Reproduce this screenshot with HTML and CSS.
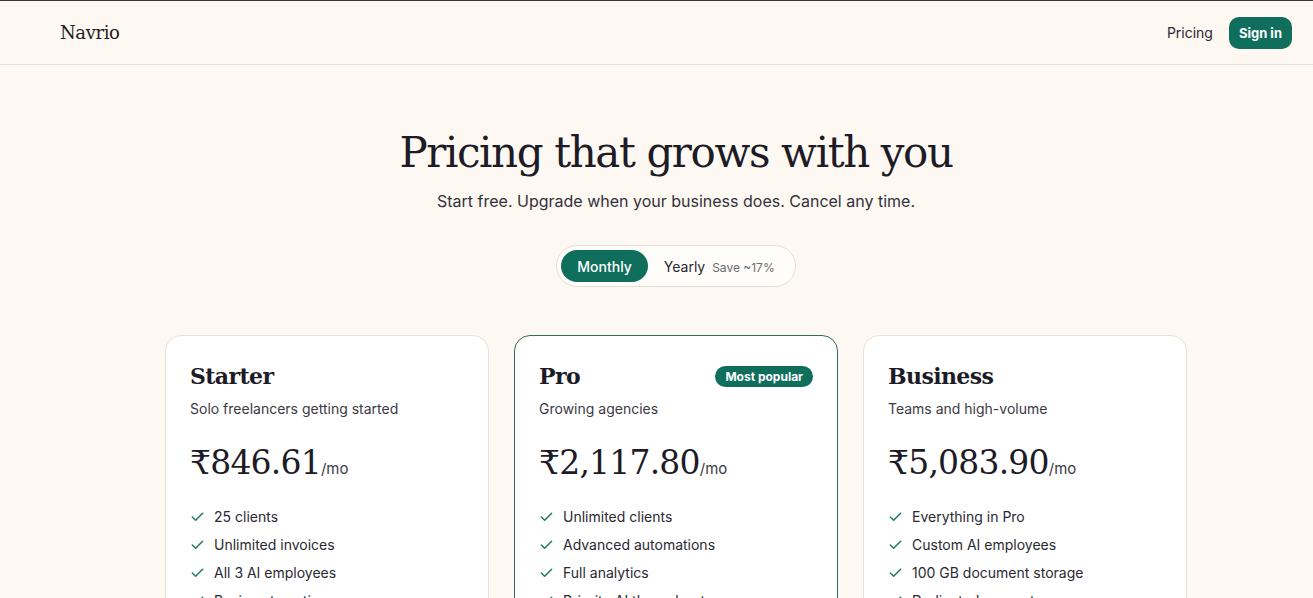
FILE: index.html
```html
<!DOCTYPE html>
<html lang="en">
<head>
  <meta charset="UTF-8">
  <meta name="viewport" content="width=device-width, initial-scale=1.0">
  <title>Navrio Pricing</title>
  <link rel="stylesheet" href="styles.css">
</head>
<body>
  <header class="topbar">
    <a class="brand" href="#">Navrio</a>
    <nav class="nav">
      <a class="nav-link" href="#">Pricing</a>
      <a class="btn-signin" href="#">Sign in</a>
    </nav>
  </header>

  <main class="pricing">
    <h1 class="title">Pricing that grows with you</h1>
    <p class="lead">Start free. Upgrade when your business does. Cancel any time.</p>

    <div class="toggle">
      <button class="toggle-btn active">Monthly</button>
      <button class="toggle-btn">Yearly <span class="save">Save ~17%</span></button>
    </div>

    <div class="plans">
      <div class="plan">
        <div class="plan-head">
          <h2 class="plan-name">Starter</h2>
        </div>
        <p class="plan-desc">Solo freelancers getting started</p>
        <div class="price"><span class="amount">₹846.61</span><span class="per">/mo</span></div>
        <ul class="features">
          <li><svg viewBox="0 0 16 16"><path d="M2.5 8.5l3.5 3.5 7.5-7.5"/></svg>25 clients</li>
          <li><svg viewBox="0 0 16 16"><path d="M2.5 8.5l3.5 3.5 7.5-7.5"/></svg>Unlimited invoices</li>
          <li><svg viewBox="0 0 16 16"><path d="M2.5 8.5l3.5 3.5 7.5-7.5"/></svg>All 3 AI employees</li>
          <li><svg viewBox="0 0 16 16"><path d="M2.5 8.5l3.5 3.5 7.5-7.5"/></svg>Basic automations</li>
        </ul>
      </div>

      <div class="plan featured">
        <div class="plan-head">
          <h2 class="plan-name">Pro</h2>
          <span class="badge">Most popular</span>
        </div>
        <p class="plan-desc">Growing agencies</p>
        <div class="price"><span class="amount">₹2,117.80</span><span class="per">/mo</span></div>
        <ul class="features">
          <li><svg viewBox="0 0 16 16"><path d="M2.5 8.5l3.5 3.5 7.5-7.5"/></svg>Unlimited clients</li>
          <li><svg viewBox="0 0 16 16"><path d="M2.5 8.5l3.5 3.5 7.5-7.5"/></svg>Advanced automations</li>
          <li><svg viewBox="0 0 16 16"><path d="M2.5 8.5l3.5 3.5 7.5-7.5"/></svg>Full analytics</li>
          <li><svg viewBox="0 0 16 16"><path d="M2.5 8.5l3.5 3.5 7.5-7.5"/></svg>Priority AI throughput</li>
        </ul>
      </div>

      <div class="plan">
        <div class="plan-head">
          <h2 class="plan-name">Business</h2>
        </div>
        <p class="plan-desc">Teams and high-volume</p>
        <div class="price"><span class="amount">₹5,083.90</span><span class="per">/mo</span></div>
        <ul class="features">
          <li><svg viewBox="0 0 16 16"><path d="M2.5 8.5l3.5 3.5 7.5-7.5"/></svg>Everything in Pro</li>
          <li><svg viewBox="0 0 16 16"><path d="M2.5 8.5l3.5 3.5 7.5-7.5"/></svg>Custom AI employees</li>
          <li><svg viewBox="0 0 16 16"><path d="M2.5 8.5l3.5 3.5 7.5-7.5"/></svg>100 GB document storage</li>
          <li><svg viewBox="0 0 16 16"><path d="M2.5 8.5l3.5 3.5 7.5-7.5"/></svg>Dedicated support</li>
        </ul>
      </div>
    </div>
  </main>
</body>
</html>
```

FILE: styles.css
```css
* {
  box-sizing: border-box;
}

body {
  margin: 0;
  background-color: #fdf8f2;
  color: #1d1b26;
  font-family: Inter, "Noto Sans", sans-serif;
  border-top: 1px solid #3b3733;
  overflow: hidden;
}

a {
  text-decoration: none;
  color: inherit;
}

.topbar {
  display: flex;
  align-items: center;
  justify-content: space-between;
  height: 64px;
  padding: 0 21px 0 60px;
  border-bottom: 1px solid #e6e0d8;
}

.brand {
  font-family: "DejaVu Serif", Georgia, serif;
  font-size: 18px;
  letter-spacing: -0.4px;
  color: #1d1b26;
}

.nav {
  display: flex;
  align-items: center;
  gap: 16px;
}

.nav-link {
  font-size: 14px;
  color: #2a2833;
}

.btn-signin {
  display: inline-flex;
  align-items: center;
  height: 32px;
  padding: 0 10px;
  background-color: #0f6e5c;
  color: white;
  border-radius: 10px;
  font-size: 13px;
  font-weight: 700;
}

.pricing {
  display: flex;
  flex-direction: column;
  align-items: center;
  padding: 58px 0 0 39px;
}

.title {
  margin: 0;
  font-family: "DejaVu Serif", Georgia, serif;
  font-weight: 400;
  font-size: 42px;
  letter-spacing: -1.4px;
  line-height: 60px;
}

.lead {
  margin: 8px 0 0;
  font-size: 16px;
  color: #33313b;
}

.toggle {
  display: flex;
  align-items: center;
  margin-top: 34px;
  padding: 4px;
  background-color: #fffdfa;
  border: 1px solid #e6dfd5;
  border-radius: 999px;
}

.toggle-btn {
  height: 32px;
  padding: 0 16px;
  border: none;
  border-radius: 999px;
  background: transparent;
  font-family: inherit;
  font-size: 14px;
  color: #2a2833;
}

.toggle-btn.active {
  background-color: #0f6e5c;
  color: white;
  font-weight: 500;
}

.save {
  margin-left: 3px;
  font-size: 12px;
  color: #6c6a70;
}

.plans {
  display: flex;
  gap: 25px;
  margin-top: 48px;
}

.plan {
  width: 324px;
  height: 320px;
  padding: 24px 24px;
  background-color: white;
  border: 1px solid #e8e1d7;
  border-radius: 16px;
}

.plan.featured {
  border-color: #2f6b5a;
}

.plan-head {
  display: flex;
  align-items: center;
  justify-content: space-between;
  height: 32px;
}

.plan-name {
  margin: 0;
  font-family: "DejaVu Serif", Georgia, serif;
  font-size: 22px;
  font-weight: 700;
  letter-spacing: -0.6px;
}

.badge {
  padding: 3px 10px;
  background-color: #0f6e5c;
  color: white;
  border-radius: 999px;
  font-size: 12px;
  font-weight: 700;
}

.plan-desc {
  margin: 8px 0 0;
  font-size: 14px;
  color: #3b3942;
}

.price {
  display: flex;
  align-items: baseline;
  margin-top: 26px;
}

.amount {
  font-family: "DejaVu Serif", Georgia, serif;
  font-size: 33px;
  letter-spacing: -0.8px;
}

.per {
  font-size: 15px;
  color: #3b3942;
}

.features {
  list-style: none;
  margin: 20px 0 0;
  padding: 0;
}

.features li {
  display: flex;
  align-items: center;
  gap: 9px;
  height: 28px;
  font-size: 14px;
  color: #2a2833;
}

.features svg {
  width: 15px;
  height: 15px;
  fill: none;
  stroke: #1f7a64;
  stroke-width: 1.6;
  stroke-linecap: round;
  stroke-linejoin: round;
}
```
